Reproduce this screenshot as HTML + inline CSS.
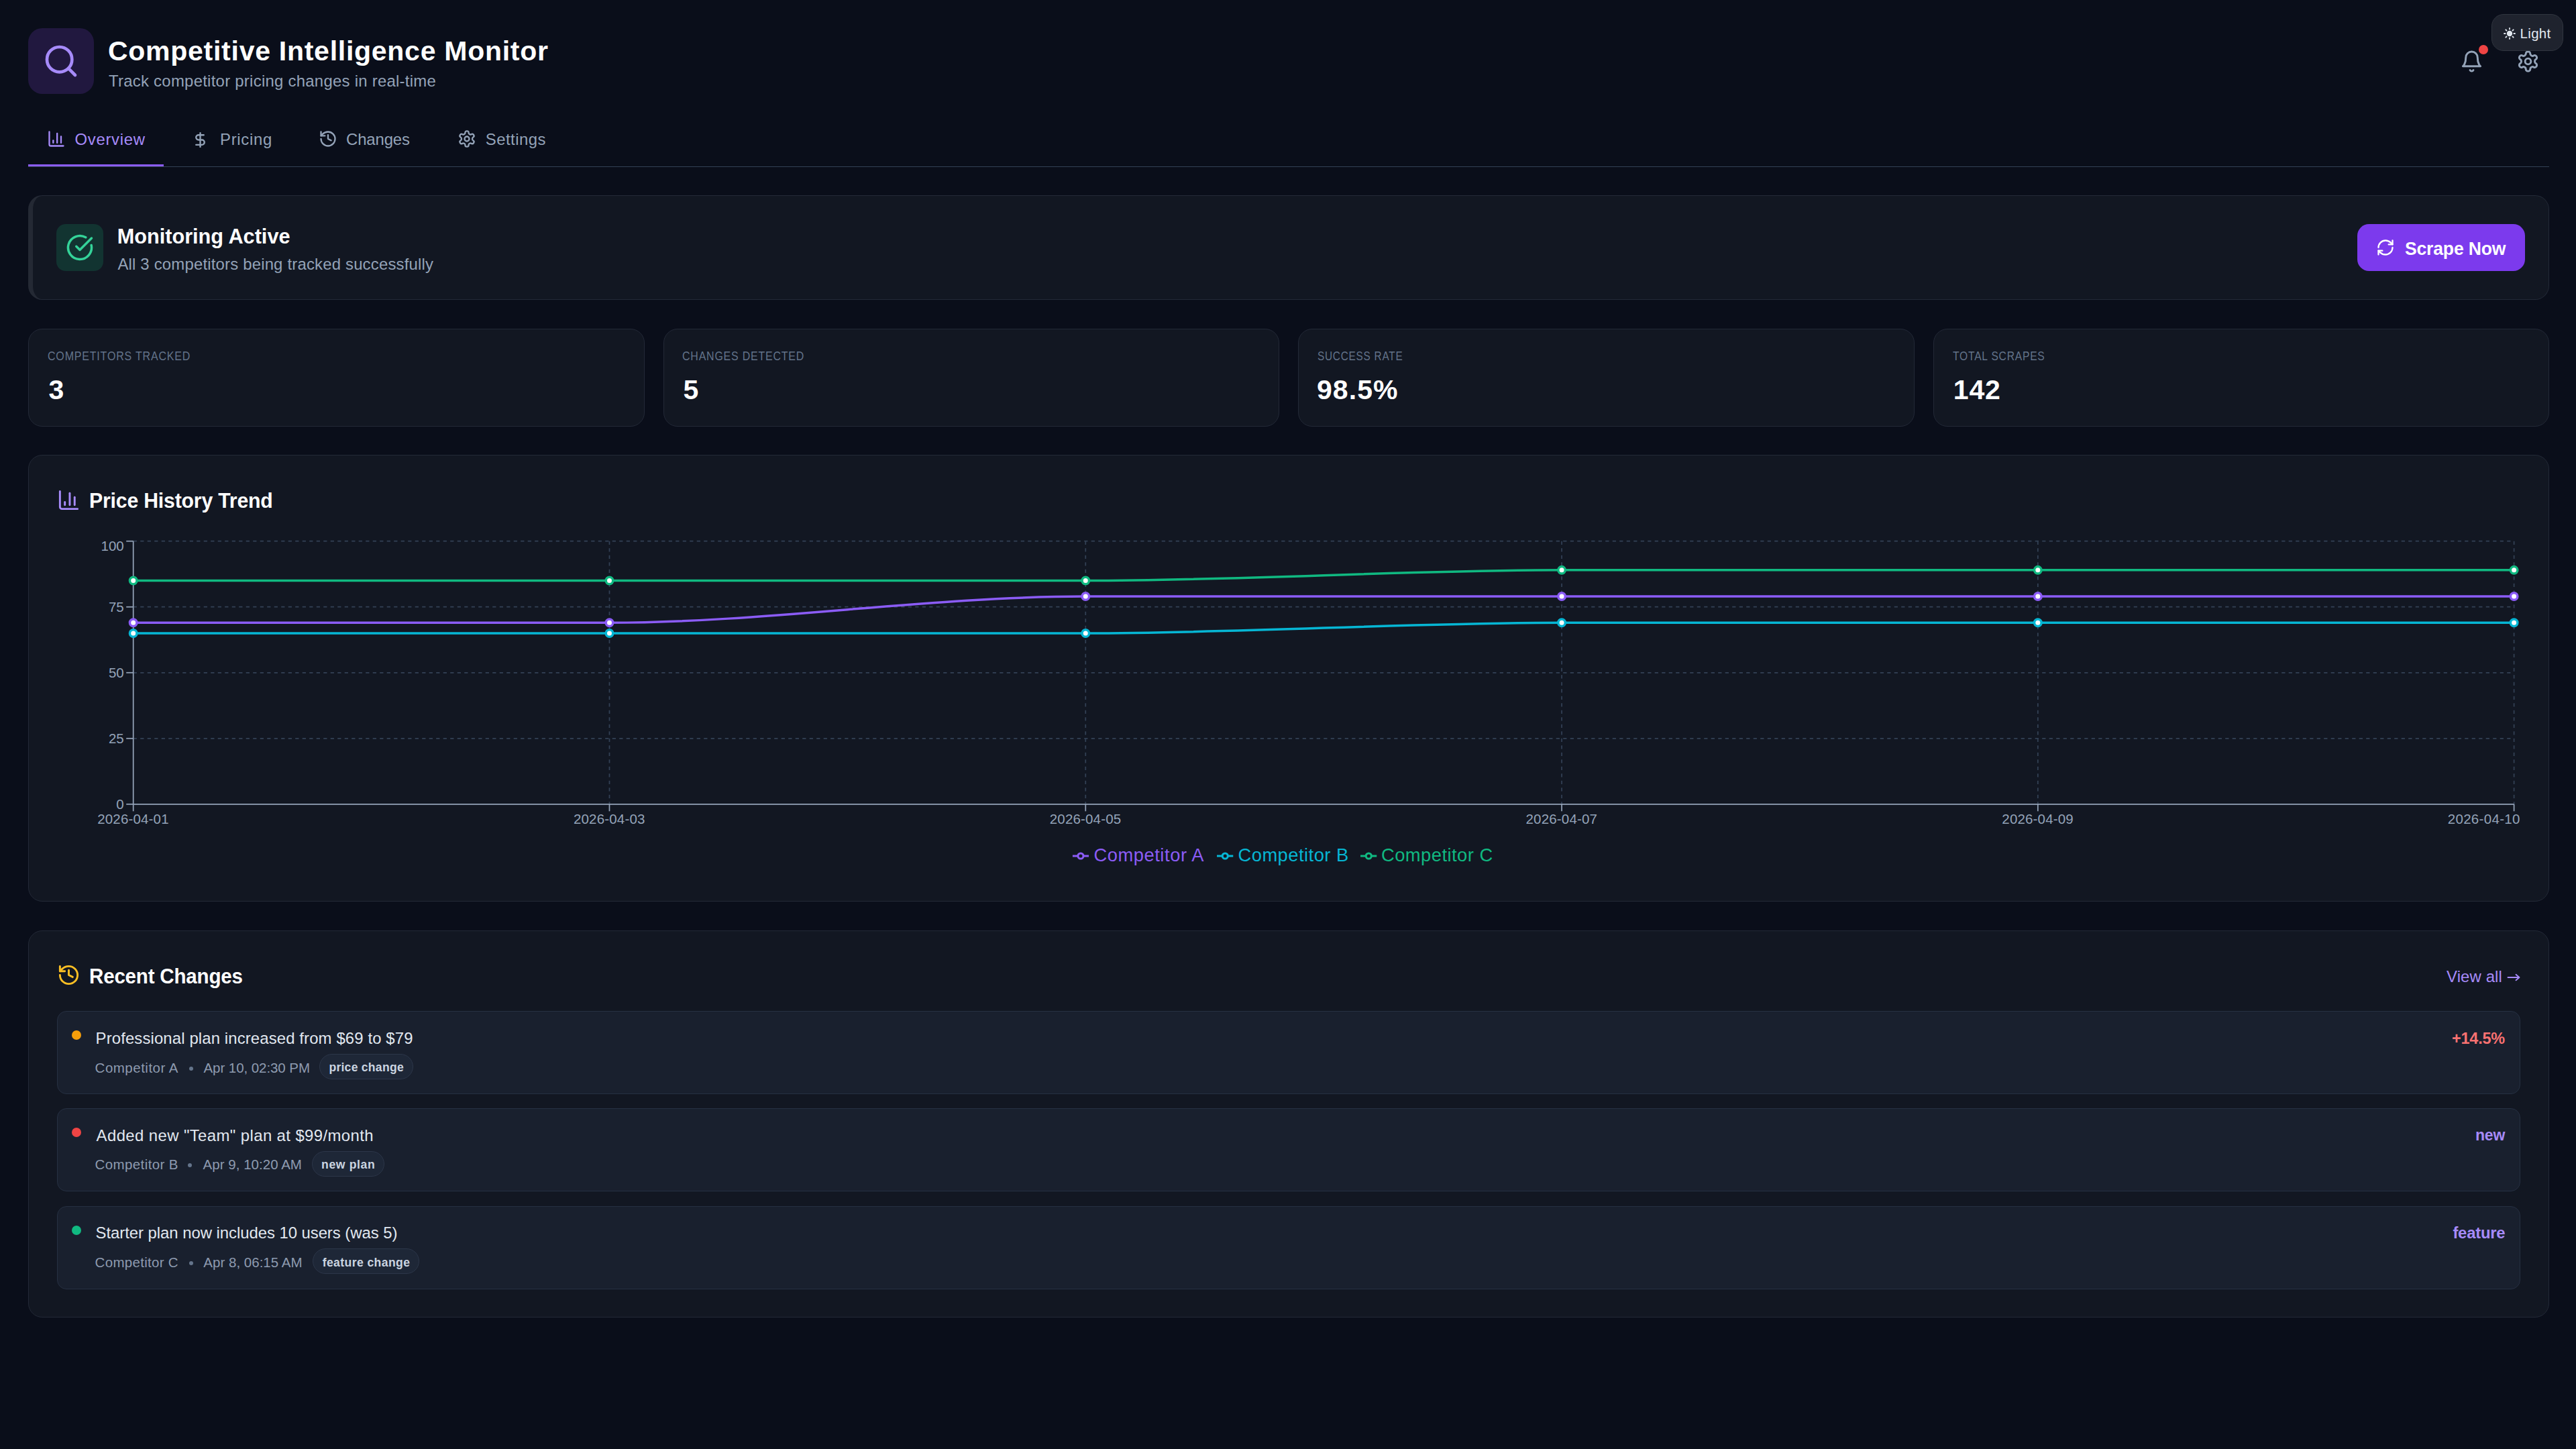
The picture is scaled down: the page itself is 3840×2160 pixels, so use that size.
<!DOCTYPE html>
<html><head><meta charset="utf-8"><title>Competitive Intelligence Monitor</title>
<style>
html,body{margin:0;padding:0;background:#0a0e1a}
body{width:3840px;height:2160px;position:relative;overflow:hidden;font-family:"Liberation Sans",sans-serif}
@media (max-width:2050px){html{zoom:0.5}}
@media (min-width:2051px) and (max-width:2350px){html{zoom:0.5714286}}
@media (min-width:2351px) and (max-width:2750px){html{zoom:0.6666667}}
@media (min-width:2751px) and (max-width:3500px){html{zoom:0.75}}
.a{position:absolute}
.t{position:absolute;white-space:nowrap;line-height:1}
.card{box-sizing:border-box;background:#121722;border:1.75px solid #232937;border-radius:21px}
.item{box-sizing:border-box;background:#19202e;border:1.75px solid #263042;border-radius:14px}
.badge{box-sizing:border-box;background:#1e2737;border:1.75px solid #2c3649;border-radius:19px}
</style></head><body>
<div class="a" style="left:42px;top:42px;width:98px;height:98px;border-radius:21px;background:#21183f"></div>
<svg class="a" style="left:63.00px;top:63.00px;" width="56.00" height="56.00" viewBox="0 0 24 24" fill="none" stroke="#a78bfa" stroke-width="2" stroke-linecap="round" stroke-linejoin="round"><circle cx="11" cy="11" r="8"/><path d="m21 21-4.3-4.3"/></svg>
<svg class="a" style="left:3667.00px;top:73.50px;" width="35.00" height="35.00" viewBox="0 0 24 24" fill="none" stroke="#94a3b8" stroke-width="2" stroke-linecap="round" stroke-linejoin="round"><path d="M6 8a6 6 0 0 1 12 0c0 7 3 9 3 9H3s3-2 3-9"/><path d="M10.3 21a1.94 1.94 0 0 0 3.4 0"/></svg>
<div class="a" style="left:3695px;top:67px;width:14px;height:14px;border-radius:50%;background:#ef4444"></div>
<svg class="a" style="left:3750.50px;top:73.50px;" width="35.00" height="35.00" viewBox="0 0 24 24" fill="none" stroke="#94a3b8" stroke-width="2" stroke-linecap="round" stroke-linejoin="round"><path d="M12.22 2h-.44a2 2 0 0 0-2 2v.18a2 2 0 0 1-1 1.73l-.43.25a2 2 0 0 1-2 0l-.15-.08a2 2 0 0 0-2.73.73l-.22.38a2 2 0 0 0 .73 2.73l.15.1a2 2 0 0 1 1 1.72v.51a2 2 0 0 1-1 1.74l-.15.09a2 2 0 0 0-.73 2.73l.22.38a2 2 0 0 0 2.73.73l.15-.08a2 2 0 0 1 2 0l.43.25a2 2 0 0 1 1 1.73V20a2 2 0 0 0 2 2h.44a2 2 0 0 0 2-2v-.18a2 2 0 0 1 1-1.73l.43-.25a2 2 0 0 1 2 0l.15.08a2 2 0 0 0 2.73-.73l.22-.39a2 2 0 0 0-.73-2.73l-.15-.08a2 2 0 0 1-1-1.74v-.5a2 2 0 0 1 1-1.74l.15-.09a2 2 0 0 0 .73-2.73l-.22-.38a2 2 0 0 0-2.73-.73l-.15.08a2 2 0 0 1-2 0l-.43-.25a2 2 0 0 1-1-1.73V4a2 2 0 0 0-2-2z"/><circle cx="12" cy="12" r="3"/></svg>
<div class="a" style="left:3714px;top:21px;width:107px;height:55px;box-sizing:border-box;border-radius:18px;background:#1f232e;border:1.75px solid #30353f"></div>
<svg class="a" style="left:3732px;top:40.5px" width="18" height="18" viewBox="0 0 18 18"><circle cx="9" cy="9" r="4.2" fill="#e2e8f0"/><g stroke="#e2e8f0" stroke-width="1.8" stroke-linecap="round"><line x1="9" y1="1" x2="9" y2="2.6"/><line x1="9" y1="15.4" x2="9" y2="17"/><line x1="1" y1="9" x2="2.6" y2="9"/><line x1="15.4" y1="9" x2="17" y2="9"/><line x1="3.3" y1="3.3" x2="4.5" y2="4.5"/><line x1="13.5" y1="13.5" x2="14.7" y2="14.7"/><line x1="3.3" y1="14.7" x2="4.5" y2="13.5"/><line x1="13.5" y1="4.5" x2="14.7" y2="3.3"/></g></svg>
<svg class="a" style="left:69.60px;top:192.90px;" width="28.00" height="28.00" viewBox="0 0 24 24" fill="none" stroke="#a78bfa" stroke-width="2" stroke-linecap="round" stroke-linejoin="round"><path d="M3 3v16a2 2 0 0 0 2 2h16"/><path d="M18 17V9"/><path d="M13 17V5"/><path d="M8 17v-3"/></svg>
<svg class="a" style="left:285.80px;top:195.90px;" width="25.00" height="25.00" viewBox="0 0 24 24" fill="none" stroke="#94a3b8" stroke-width="2.24" stroke-linecap="round" stroke-linejoin="round"><line x1="12" x2="12" y1="2" y2="22"/><path d="M17 5H9.5a3.5 3.5 0 0 0 0 7h5a3.5 3.5 0 0 1 0 7H6"/></svg>
<svg class="a" style="left:474.50px;top:192.90px;" width="28.00" height="28.00" viewBox="0 0 24 24" fill="none" stroke="#94a3b8" stroke-width="2" stroke-linecap="round" stroke-linejoin="round"><path d="M3 12a9 9 0 1 0 9-9 9.75 9.75 0 0 0-6.74 2.74L3 8"/><path d="M3 3v5h5"/><path d="M12 7v5l4 2"/></svg>
<svg class="a" style="left:681.60px;top:193.00px;" width="28.00" height="28.00" viewBox="0 0 24 24" fill="none" stroke="#94a3b8" stroke-width="2" stroke-linecap="round" stroke-linejoin="round"><path d="M12.22 2h-.44a2 2 0 0 0-2 2v.18a2 2 0 0 1-1 1.73l-.43.25a2 2 0 0 1-2 0l-.15-.08a2 2 0 0 0-2.73.73l-.22.38a2 2 0 0 0 .73 2.73l.15.1a2 2 0 0 1 1 1.72v.51a2 2 0 0 1-1 1.74l-.15.09a2 2 0 0 0-.73 2.73l.22.38a2 2 0 0 0 2.73.73l.15-.08a2 2 0 0 1 2 0l.43.25a2 2 0 0 1 1 1.73V20a2 2 0 0 0 2 2h.44a2 2 0 0 0 2-2v-.18a2 2 0 0 1 1-1.73l.43-.25a2 2 0 0 1 2 0l.15.08a2 2 0 0 0 2.73-.73l.22-.39a2 2 0 0 0-.73-2.73l-.15-.08a2 2 0 0 1-1-1.74v-.5a2 2 0 0 1 1-1.74l.15-.09a2 2 0 0 0 .73-2.73l-.22-.38a2 2 0 0 0-2.73-.73l-.15.08a2 2 0 0 1-2 0l-.43-.25a2 2 0 0 1-1-1.73V4a2 2 0 0 0-2-2z"/><circle cx="12" cy="12" r="3"/></svg>
<div class="a" style="left:42px;top:247.5px;width:3758px;height:1.75px;background:#334155"></div>
<div class="a" style="left:42px;top:244.5px;width:202px;height:3.5px;background:#8b5cf6"></div>
<div class="a card" style="left:42px;top:291px;width:3758px;height:155.5px;border-left:7px solid #242934"></div>
<div class="a" style="left:84px;top:334px;width:70px;height:70px;border-radius:14px;background:#123431"></div>
<svg class="a" style="left:98.00px;top:348.00px;" width="42.00" height="42.00" viewBox="0 0 24 24" fill="none" stroke="#34d399" stroke-width="2" stroke-linecap="round" stroke-linejoin="round"><path d="M21.801 10A10 10 0 1 1 17 3.335"/><path d="m9 11 3 3L22 4"/></svg>
<div class="a" style="left:3514px;top:334px;width:250px;height:70px;border-radius:17.5px;background:#7c3aed"></div>
<svg class="a" style="left:3541.60px;top:354.60px;" width="28.00" height="28.00" viewBox="0 0 24 24" fill="none" stroke="#ffffff" stroke-width="2" stroke-linecap="round" stroke-linejoin="round"><path d="M3 12a9 9 0 0 1 9-9 9.75 9.75 0 0 1 6.74 2.74L21 8"/><path d="M21 3v5h-5"/><path d="M21 12a9 9 0 0 1-9 9 9.75 9.75 0 0 1-6.74-2.74L3 16"/><path d="M8 16H3v5"/></svg>
<div class="a card" style="left:42.00px;top:489.5px;width:918.5px;height:146px"></div>
<div class="a card" style="left:988.50px;top:489.5px;width:918.5px;height:146px"></div>
<div class="a card" style="left:1935.00px;top:489.5px;width:918.5px;height:146px"></div>
<div class="a card" style="left:2881.50px;top:489.5px;width:918.5px;height:146px"></div>
<svg class="a" style="left:3737px;top:1449px;z-index:5" width="20" height="16" viewBox="0 0 20 16" fill="none" stroke="#a78bfa" stroke-width="1.9" stroke-linecap="round" stroke-linejoin="round"><path d="M1.5 8H18.5M13.5 3.8L18.5 8L13.5 12.2"/></svg>
<div class="a card" style="left:42px;top:678px;width:3758px;height:666px"></div>
<svg class="a" style="left:85.10px;top:728.10px;" width="35.00" height="35.00" viewBox="0 0 24 24" fill="none" stroke="#a78bfa" stroke-width="2" stroke-linecap="round" stroke-linejoin="round"><path d="M3 3v16a2 2 0 0 0 2 2h16"/><path d="M18 17V9"/><path d="M13 17V5"/><path d="M8 17v-3"/></svg>
<div class="a card" style="left:42px;top:1387px;width:3758px;height:576.5px"></div>
<svg class="a" style="left:84.80px;top:1436.40px;" width="35.00" height="35.00" viewBox="0 0 24 24" fill="none" stroke="#fbbf24" stroke-width="2" stroke-linecap="round" stroke-linejoin="round"><path d="M3 12a9 9 0 1 0 9-9 9.75 9.75 0 0 0-6.74 2.74L3 8"/><path d="M3 3v5h5"/><path d="M12 7v5l4 2"/></svg>
<div class="a item" style="left:85px;top:1507.30px;width:3672px;height:124px"></div>
<div class="a" style="left:107px;top:1536.30px;width:14px;height:14px;border-radius:50%;background:#f59e0b"></div>
<div class="a" style="left:281.90px;top:1589.50px;width:6px;height:6px;border-radius:50%;background:#64748b"></div>
<div class="a badge" style="left:476.10px;top:1571.00px;width:140.10px;height:38px"></div>
<div class="a item" style="left:85px;top:1652.00px;width:3672px;height:124px"></div>
<div class="a" style="left:107px;top:1681.00px;width:14px;height:14px;border-radius:50%;background:#ef4444"></div>
<div class="a" style="left:280.40px;top:1734.20px;width:6px;height:6px;border-radius:50%;background:#64748b"></div>
<div class="a badge" style="left:465.00px;top:1715.70px;width:108.40px;height:38px"></div>
<div class="a item" style="left:85px;top:1797.60px;width:3672px;height:124px"></div>
<div class="a" style="left:107px;top:1826.60px;width:14px;height:14px;border-radius:50%;background:#10b981"></div>
<div class="a" style="left:281.60px;top:1879.80px;width:6px;height:6px;border-radius:50%;background:#64748b"></div>
<div class="a badge" style="left:466.30px;top:1861.30px;width:158.70px;height:38px"></div>
<svg class="a" style="left:0;top:0" width="3840" height="2160" viewBox="0 0 3840 2160"><g stroke="#334155" stroke-width="1.75" stroke-dasharray="5.25 5.25"><line x1="198.70" y1="1100.78" x2="3747.60" y2="1100.78"/><line x1="198.70" y1="1002.75" x2="3747.60" y2="1002.75"/><line x1="198.70" y1="904.73" x2="3747.60" y2="904.73"/><line x1="198.70" y1="806.70" x2="3747.60" y2="806.70"/><line x1="908.48" y1="806.70" x2="908.48" y2="1198.80"/><line x1="1618.26" y1="806.70" x2="1618.26" y2="1198.80"/><line x1="2328.04" y1="806.70" x2="2328.04" y2="1198.80"/><line x1="3037.82" y1="806.70" x2="3037.82" y2="1198.80"/><line x1="3747.60" y1="806.70" x2="3747.60" y2="1198.80"/></g><g stroke="#94a3b8" stroke-width="1.75"><line x1="198.70" y1="806.70" x2="198.70" y2="1198.80"/><line x1="198.70" y1="1198.80" x2="3747.60" y2="1198.80"/><line x1="188.20" y1="1198.80" x2="198.70" y2="1198.80"/><line x1="188.20" y1="1100.78" x2="198.70" y2="1100.78"/><line x1="188.20" y1="1002.75" x2="198.70" y2="1002.75"/><line x1="188.20" y1="904.73" x2="198.70" y2="904.73"/><line x1="188.20" y1="806.70" x2="198.70" y2="806.70"/><line x1="198.70" y1="1198.80" x2="198.70" y2="1209.30"/><line x1="908.48" y1="1198.80" x2="908.48" y2="1209.30"/><line x1="1618.26" y1="1198.80" x2="1618.26" y2="1209.30"/><line x1="2328.04" y1="1198.80" x2="2328.04" y2="1209.30"/><line x1="3037.82" y1="1198.80" x2="3037.82" y2="1209.30"/><line x1="3747.60" y1="1198.80" x2="3747.60" y2="1209.30"/></g><path d="M198.70,928.25C435.29,928.25,671.89,928.25,908.48,928.25C1145.07,928.25,1381.67,889.04,1618.26,889.04C1854.85,889.04,2091.45,889.04,2328.04,889.04C2564.63,889.04,2801.23,889.04,3037.82,889.04C3274.41,889.04,3511.01,889.04,3747.60,889.04" fill="none" stroke="#8b5cf6" stroke-width="3.5"/><path d="M198.70,943.94C435.29,943.94,671.89,943.94,908.48,943.94C1145.07,943.94,1381.67,943.94,1618.26,943.94C1854.85,943.94,2091.45,928.25,2328.04,928.25C2564.63,928.25,2801.23,928.25,3037.82,928.25C3274.41,928.25,3511.01,928.25,3747.60,928.25" fill="none" stroke="#06b6d4" stroke-width="3.5"/><path d="M198.70,865.52C435.29,865.52,671.89,865.52,908.48,865.52C1145.07,865.52,1381.67,865.52,1618.26,865.52C1854.85,865.52,2091.45,849.83,2328.04,849.83C2564.63,849.83,2801.23,849.83,3037.82,849.83C3274.41,849.83,3511.01,849.83,3747.60,849.83" fill="none" stroke="#10b981" stroke-width="3.5"/><circle cx="198.70" cy="928.25" r="5.25" fill="#fff" stroke="#8b5cf6" stroke-width="3.5"/><circle cx="908.48" cy="928.25" r="5.25" fill="#fff" stroke="#8b5cf6" stroke-width="3.5"/><circle cx="1618.26" cy="889.04" r="5.25" fill="#fff" stroke="#8b5cf6" stroke-width="3.5"/><circle cx="2328.04" cy="889.04" r="5.25" fill="#fff" stroke="#8b5cf6" stroke-width="3.5"/><circle cx="3037.82" cy="889.04" r="5.25" fill="#fff" stroke="#8b5cf6" stroke-width="3.5"/><circle cx="3747.60" cy="889.04" r="5.25" fill="#fff" stroke="#8b5cf6" stroke-width="3.5"/><circle cx="198.70" cy="943.94" r="5.25" fill="#fff" stroke="#06b6d4" stroke-width="3.5"/><circle cx="908.48" cy="943.94" r="5.25" fill="#fff" stroke="#06b6d4" stroke-width="3.5"/><circle cx="1618.26" cy="943.94" r="5.25" fill="#fff" stroke="#06b6d4" stroke-width="3.5"/><circle cx="2328.04" cy="928.25" r="5.25" fill="#fff" stroke="#06b6d4" stroke-width="3.5"/><circle cx="3037.82" cy="928.25" r="5.25" fill="#fff" stroke="#06b6d4" stroke-width="3.5"/><circle cx="3747.60" cy="928.25" r="5.25" fill="#fff" stroke="#06b6d4" stroke-width="3.5"/><circle cx="198.70" cy="865.52" r="5.25" fill="#fff" stroke="#10b981" stroke-width="3.5"/><circle cx="908.48" cy="865.52" r="5.25" fill="#fff" stroke="#10b981" stroke-width="3.5"/><circle cx="1618.26" cy="865.52" r="5.25" fill="#fff" stroke="#10b981" stroke-width="3.5"/><circle cx="2328.04" cy="849.83" r="5.25" fill="#fff" stroke="#10b981" stroke-width="3.5"/><circle cx="3037.82" cy="849.83" r="5.25" fill="#fff" stroke="#10b981" stroke-width="3.5"/><circle cx="3747.60" cy="849.83" r="5.25" fill="#fff" stroke="#10b981" stroke-width="3.5"/><svg x="1598.70" y="1263.75" width="24.5" height="24.5" viewBox="0 0 32 32"><path stroke-width="4" fill="none" stroke="#8b5cf6" d="M0,16h10.666666666666666A5.333333333333333,5.333333333333333,0,1,1,21.333333333333332,16H32M21.333333333333332,16A5.333333333333333,5.333333333333333,0,1,1,10.666666666666666,16"/></svg><svg x="1814.00" y="1263.75" width="24.5" height="24.5" viewBox="0 0 32 32"><path stroke-width="4" fill="none" stroke="#06b6d4" d="M0,16h10.666666666666666A5.333333333333333,5.333333333333333,0,1,1,21.333333333333332,16H32M21.333333333333332,16A5.333333333333333,5.333333333333333,0,1,1,10.666666666666666,16"/></svg><svg x="2028.00" y="1263.75" width="24.5" height="24.5" viewBox="0 0 32 32"><path stroke-width="4" fill="none" stroke="#10b981" d="M0,16h10.666666666666666A5.333333333333333,5.333333333333333,0,1,1,21.333333333333332,16H32M21.333333333333332,16A5.333333333333333,5.333333333333333,0,1,1,10.666666666666666,16"/></svg></svg>
<div class="t" style="left:161.00px;top:56.09px;font-size:41.00px;letter-spacing:0.732px;font-weight:bold;color:#ffffff">Competitive Intelligence Monitor</div>
<div class="t" style="left:162.00px;top:108.77px;font-size:23.90px;letter-spacing:0.273px;font-weight:normal;color:#94a3b8">Track competitor pricing changes in real-time</div>
<div class="t" style="left:111.60px;top:195.97px;font-size:23.90px;letter-spacing:0.684px;font-weight:normal;color:#a78bfa">Overview</div>
<div class="t" style="left:328.00px;top:195.97px;font-size:23.90px;letter-spacing:0.710px;font-weight:normal;color:#94a3b8">Pricing</div>
<div class="t" style="left:516.00px;top:195.97px;font-size:23.90px;letter-spacing:-0.115px;font-weight:normal;color:#94a3b8">Changes</div>
<div class="t" style="left:723.70px;top:195.97px;font-size:23.90px;letter-spacing:0.503px;font-weight:normal;color:#94a3b8">Settings</div>
<div class="t" style="left:3756.50px;top:39.75px;font-size:20.50px;letter-spacing:0.336px;font-weight:normal;color:#e2e8f0">Light</div>
<div class="t" style="left:174.70px;top:337.91px;font-size:30.70px;letter-spacing:-0.011px;font-weight:bold;color:#ffffff">Monitoring Active</div>
<div class="t" style="left:175.40px;top:382.37px;font-size:23.90px;letter-spacing:0.197px;font-weight:normal;color:#94a3b8">All 3 competitors being tracked successfully</div>
<div class="t" style="left:3584.70px;top:356.89px;font-size:27.30px;letter-spacing:-0.200px;font-weight:bold;color:#ffffff;transform:scaleX(0.9735);transform-origin:0 0">Scrape Now</div>
<div class="t" style="left:71.40px;top:523.10px;font-size:17.60px;letter-spacing:0.900px;font-weight:normal;color:#64748b;transform:scaleX(0.9093);transform-origin:0 0">COMPETITORS TRACKED</div>
<div class="t" style="left:72.60px;top:561.29px;font-size:41.00px;letter-spacing:0.000px;font-weight:bold;color:#ffffff">3</div>
<div class="t" style="left:1017.40px;top:523.10px;font-size:17.60px;letter-spacing:0.900px;font-weight:normal;color:#64748b;transform:scaleX(0.9052);transform-origin:0 0">CHANGES DETECTED</div>
<div class="t" style="left:1018.50px;top:561.29px;font-size:41.00px;letter-spacing:0.000px;font-weight:bold;color:#ffffff">5</div>
<div class="t" style="left:1964.00px;top:523.10px;font-size:17.60px;letter-spacing:0.900px;font-weight:normal;color:#64748b;transform:scaleX(0.8706);transform-origin:0 0">SUCCESS RATE</div>
<div class="t" style="left:1963.00px;top:561.29px;font-size:41.00px;letter-spacing:1.051px;font-weight:bold;color:#ffffff">98.5%</div>
<div class="t" style="left:2910.90px;top:523.10px;font-size:17.60px;letter-spacing:0.900px;font-weight:normal;color:#64748b;transform:scaleX(0.8870);transform-origin:0 0">TOTAL SCRAPES</div>
<div class="t" style="left:2911.80px;top:561.29px;font-size:41.00px;letter-spacing:0.798px;font-weight:bold;color:#ffffff">142</div>
<div class="t" style="left:132.63px;top:732.31px;font-size:30.70px;letter-spacing:-0.200px;font-weight:bold;color:#ffffff;transform:scaleX(0.9856);transform-origin:0 0">Price History Trend</div>
<div class="t" style="left:132.87px;top:1441.01px;font-size:30.70px;letter-spacing:-0.200px;font-weight:bold;color:#ffffff;transform:scaleX(0.9626);transform-origin:0 0">Recent Changes</div>
<div class="t" style="left:3647.00px;top:1443.77px;font-size:23.90px;letter-spacing:0.131px;font-weight:normal;color:#a78bfa">View all</div>
<div class="t" style="left:142.60px;top:1536.07px;font-size:23.90px;letter-spacing:0.129px;font-weight:normal;color:#e2e8f0">Professional plan increased from $69 to $79</div>
<div class="t" style="left:141.60px;top:1581.75px;font-size:20.50px;letter-spacing:0.495px;font-weight:normal;color:#8e9bb0">Competitor A</div>
<div class="t" style="left:303.50px;top:1581.75px;font-size:20.50px;letter-spacing:-0.071px;font-weight:normal;color:#8e9bb0">Apr 10, 02:30 PM</div>
<div class="t" style="left:490.40px;top:1583.20px;font-size:17.60px;letter-spacing:0.250px;font-weight:bold;color:#cbd5e1">price change</div>
<div class="t" style="left:3655.32px;top:1535.77px;font-size:23.90px;letter-spacing:-0.200px;font-weight:bold;color:#f87171;transform:scaleX(0.9818);transform-origin:0 0">+14.5%</div>
<div class="t" style="left:143.60px;top:1680.77px;font-size:23.90px;letter-spacing:0.410px;font-weight:normal;color:#e2e8f0">Added new &quot;Team&quot; plan at $99/month</div>
<div class="t" style="left:141.60px;top:1726.45px;font-size:20.50px;letter-spacing:0.386px;font-weight:normal;color:#8e9bb0">Competitor B</div>
<div class="t" style="left:302.60px;top:1726.45px;font-size:20.50px;letter-spacing:0.024px;font-weight:normal;color:#8e9bb0">Apr 9, 10:20 AM</div>
<div class="t" style="left:479.00px;top:1727.90px;font-size:17.60px;letter-spacing:0.639px;font-weight:bold;color:#cbd5e1">new plan</div>
<div class="t" style="left:3689.54px;top:1680.47px;font-size:23.90px;letter-spacing:-0.200px;font-weight:bold;color:#a78bfa;transform:scaleX(0.9631);transform-origin:0 0">new</div>
<div class="t" style="left:142.60px;top:1826.37px;font-size:23.90px;letter-spacing:-0.042px;font-weight:normal;color:#e2e8f0">Starter plan now includes 10 users (was 5)</div>
<div class="t" style="left:141.60px;top:1872.05px;font-size:20.50px;letter-spacing:0.295px;font-weight:normal;color:#8e9bb0">Competitor C</div>
<div class="t" style="left:303.30px;top:1872.05px;font-size:20.50px;letter-spacing:0.017px;font-weight:normal;color:#8e9bb0">Apr 8, 06:15 AM</div>
<div class="t" style="left:480.70px;top:1873.50px;font-size:17.60px;letter-spacing:0.395px;font-weight:bold;color:#cbd5e1">feature change</div>
<div class="t" style="left:3656.40px;top:1826.07px;font-size:23.90px;letter-spacing:-0.246px;font-weight:bold;color:#a78bfa">feature</div>
<div class="t" style="left:150.50px;top:803.75px;font-size:20.50px;letter-spacing:0.000px;font-weight:normal;color:#94a3b8">100</div>
<div class="t" style="left:161.90px;top:894.85px;font-size:20.50px;letter-spacing:0.000px;font-weight:normal;color:#94a3b8">75</div>
<div class="t" style="left:161.90px;top:992.80px;font-size:20.50px;letter-spacing:0.000px;font-weight:normal;color:#94a3b8">50</div>
<div class="t" style="left:161.90px;top:1090.82px;font-size:20.50px;letter-spacing:0.000px;font-weight:normal;color:#94a3b8">25</div>
<div class="t" style="left:173.30px;top:1188.65px;font-size:20.50px;letter-spacing:0.000px;font-weight:normal;color:#94a3b8">0</div>
<div class="t" style="left:145.20px;top:1210.65px;font-size:20.50px;letter-spacing:0.171px;font-weight:normal;color:#94a3b8">2026-04-01</div>
<div class="t" style="left:854.98px;top:1210.65px;font-size:20.50px;letter-spacing:0.171px;font-weight:normal;color:#94a3b8">2026-04-03</div>
<div class="t" style="left:1564.76px;top:1210.65px;font-size:20.50px;letter-spacing:0.171px;font-weight:normal;color:#94a3b8">2026-04-05</div>
<div class="t" style="left:2274.54px;top:1210.65px;font-size:20.50px;letter-spacing:0.171px;font-weight:normal;color:#94a3b8">2026-04-07</div>
<div class="t" style="left:2984.32px;top:1210.65px;font-size:20.50px;letter-spacing:0.171px;font-weight:normal;color:#94a3b8">2026-04-09</div>
<div class="t" style="left:3648.70px;top:1210.65px;font-size:20.50px;letter-spacing:0.327px;font-weight:normal;color:#94a3b8">2026-04-10</div>
<div class="t" style="left:1630.40px;top:1260.89px;font-size:27.30px;letter-spacing:0.565px;font-weight:normal;color:#8b5cf6">Competitor A</div>
<div class="t" style="left:1845.50px;top:1260.89px;font-size:27.30px;letter-spacing:0.492px;font-weight:normal;color:#06b6d4">Competitor B</div>
<div class="t" style="left:2059.00px;top:1260.89px;font-size:27.30px;letter-spacing:0.483px;font-weight:normal;color:#10b981">Competitor C</div>
</body></html>
